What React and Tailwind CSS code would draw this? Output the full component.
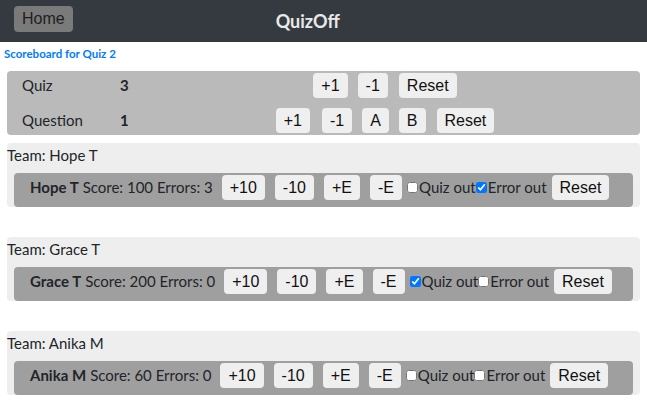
const teams = [
  { name: 'Hope T', score: 100, errors: 3, quizOut: false, errorOut: true },
  { name: 'Grace T', score: 200, errors: 0, quizOut: true, errorOut: false },
  { name: 'Anika M', score: 60, errors: 0, quizOut: false, errorOut: false },
];

const Btn = ({ children, className = '' }) => (
  <button
    type="button"
    className={`h-[25px] px-2 rounded-[4px] bg-[#efefef] text-[16px] leading-none text-[#111] font-['Liberation_Sans',Arial,sans-serif] ${className}`}
  >
    {children}
  </button>
);

const TeamCard = ({ team }) => (
  <div className="mx-[7px] h-[64px] rounded-[4px] bg-[#eeeeee]">
    <div className="h-[30px] leading-[24px] text-[#212529]">Team: {team.name}</div>
    <div className="mx-[7px] h-[34px] pt-[2px] pl-[16px] rounded-[4px] bg-[#a09f9f] flex items-start">
      <div className="h-[25px] flex items-center whitespace-nowrap text-[#212529] mr-[4px]">
        <span className="font-bold">{team.name}</span>
        <span className="ml-[4px]">Score: {team.score} Errors: {team.errors}</span>
      </div>
      <Btn className="mx-[5px]">+10</Btn>
      <Btn className="mx-[5px]">-10</Btn>
      <Btn className="mx-[5px]">+E</Btn>
      <Btn className="mx-[5px]">-E</Btn>
      <label className="h-[25px] flex items-center whitespace-nowrap text-[#212529]">
        <input type="checkbox" defaultChecked={team.quizOut} className="w-[11px] h-[11px] ml-0 mr-[1px]" />
        Quiz out
      </label>
      <label className="h-[25px] flex items-center whitespace-nowrap text-[#212529]">
        <input type="checkbox" defaultChecked={team.errorOut} className="w-[11px] h-[11px] ml-0 mr-[1px]" />
        Error out
      </label>
      <Btn className="ml-[5px]">Reset</Btn>
    </div>
  </div>
);

export default function App() {
  return (
    <div className="w-[647px] h-[404px] bg-white font-['Lato',sans-serif] text-[15px] text-[#212529] overflow-hidden">
      <nav className="h-[42px] bg-[#343a40] flex items-center pl-[14px]">
        <button
          type="button"
          className="h-[26px] px-2 mb-[4px] rounded-[4px] bg-[#7a7a7a] text-[#1e1e1e] text-[16px] leading-none font-['Liberation_Sans',Arial,sans-serif]"
        >
          Home
        </button>
        <div className="ml-[203px] text-[18px] font-bold text-[#e9e9e9]">QuizOff</div>
      </nav>

      <div className="pl-[4px] pt-[4px] mb-[9px] h-[20px] text-[11.5px] leading-[16px] font-bold text-[#007bff]">
        Scoreboard for Quiz 2
      </div>

      <div className="mx-[7px] h-[64px] rounded-[4px] bg-[#bababa] py-[2px] flex flex-col gap-[10px]">
        <div className="grid grid-cols-[98px_25px_1fr] pl-[15px] pr-[15px] items-center h-[25px]">
          <span>Quiz</span>
          <span className="font-bold">3</span>
          <div className="flex justify-center gap-[10px]">
            <Btn>+1</Btn>
            <Btn>-1</Btn>
            <Btn className="ml-[1px]">Reset</Btn>
          </div>
        </div>
        <div className="grid grid-cols-[98px_25px_1fr] pl-[15px] pr-[15px] items-center h-[25px]">
          <span>Question</span>
          <span className="font-bold">1</span>
          <div className="flex justify-center">
            <Btn>+1</Btn>
            <Btn className="ml-[12px]">-1</Btn>
            <Btn className="ml-[10px]">A</Btn>
            <Btn className="ml-[10px]">B</Btn>
            <Btn className="ml-[11px]">Reset</Btn>
          </div>
        </div>
      </div>

      <div className="mt-[8px] flex flex-col gap-[30px]">
        {teams.map((t) => (
          <TeamCard key={t.name} team={t} />
        ))}
      </div>
    </div>
  );
}
